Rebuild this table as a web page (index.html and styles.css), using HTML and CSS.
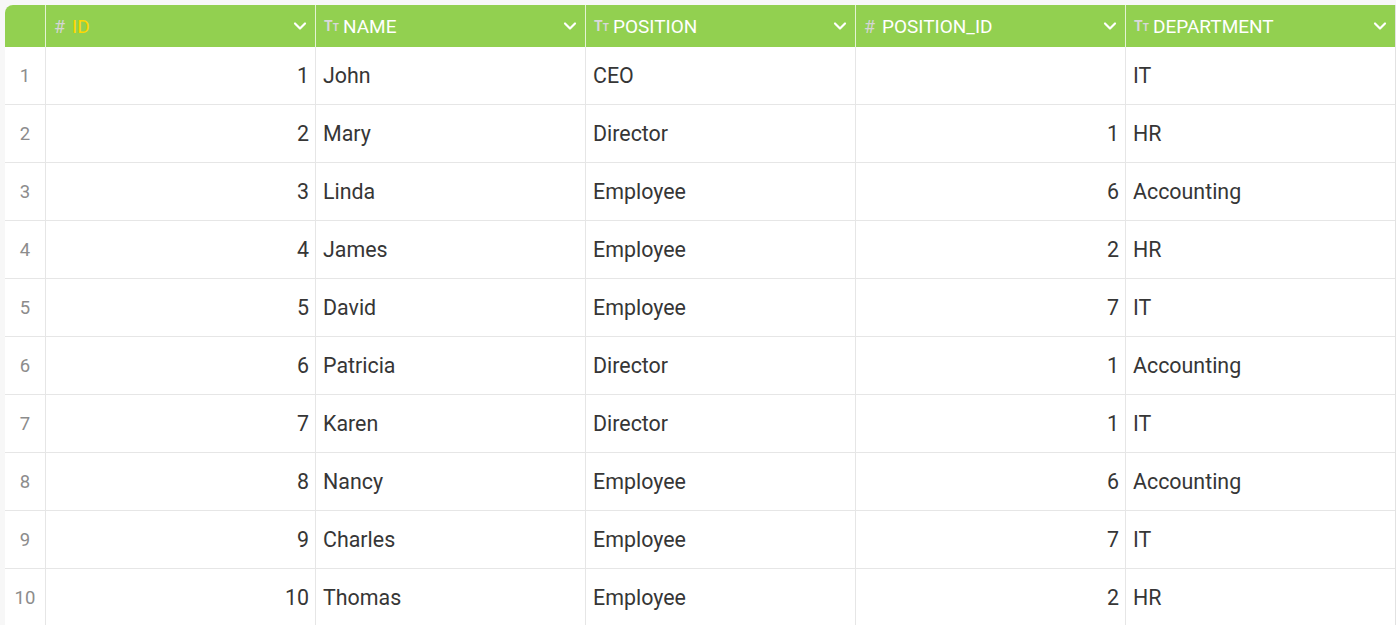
FILE: index.html
```html
<!DOCTYPE html>
<html>
<head>
<meta charset="utf-8">
<link rel="stylesheet" href="styles.css">
</head>
<body>
<div class="grid">
  <div class="row head">
    <div class="cell idx"></div>
    <div class="cell hcell"><span class="hash">#</span><span class="hname key">ID</span><svg class="chev" viewBox="0 0 14 10"><path d="M2 2.5 L7 7.5 L12 2.5" fill="none" stroke="#fff" stroke-width="2.2" stroke-linecap="round" stroke-linejoin="round"/></svg></div>
    <div class="cell hcell"><span class="tt"><span class="tb">T</span><span class="ts">T</span></span><span class="hname">NAME</span><svg class="chev" viewBox="0 0 14 10"><path d="M2 2.5 L7 7.5 L12 2.5" fill="none" stroke="#fff" stroke-width="2.2" stroke-linecap="round" stroke-linejoin="round"/></svg></div>
    <div class="cell hcell"><span class="tt"><span class="tb">T</span><span class="ts">T</span></span><span class="hname">POSITION</span><svg class="chev" viewBox="0 0 14 10"><path d="M2 2.5 L7 7.5 L12 2.5" fill="none" stroke="#fff" stroke-width="2.2" stroke-linecap="round" stroke-linejoin="round"/></svg></div>
    <div class="cell hcell"><span class="hash">#</span><span class="hname">POSITION_ID</span><svg class="chev" viewBox="0 0 14 10"><path d="M2 2.5 L7 7.5 L12 2.5" fill="none" stroke="#fff" stroke-width="2.2" stroke-linecap="round" stroke-linejoin="round"/></svg></div>
    <div class="cell hcell"><span class="tt"><span class="tb">T</span><span class="ts">T</span></span><span class="hname">DEPARTMENT</span><svg class="chev" viewBox="0 0 14 10"><path d="M2 2.5 L7 7.5 L12 2.5" fill="none" stroke="#fff" stroke-width="2.2" stroke-linecap="round" stroke-linejoin="round"/></svg></div>
  </div>
  <div class="row"><div class="cell idx">1</div><div class="cell num">1</div><div class="cell">John</div><div class="cell">CEO</div><div class="cell num"></div><div class="cell">IT</div></div>
  <div class="row"><div class="cell idx">2</div><div class="cell num">2</div><div class="cell">Mary</div><div class="cell">Director</div><div class="cell num">1</div><div class="cell">HR</div></div>
  <div class="row"><div class="cell idx">3</div><div class="cell num">3</div><div class="cell">Linda</div><div class="cell">Employee</div><div class="cell num">6</div><div class="cell">Accounting</div></div>
  <div class="row"><div class="cell idx">4</div><div class="cell num">4</div><div class="cell">James</div><div class="cell">Employee</div><div class="cell num">2</div><div class="cell">HR</div></div>
  <div class="row"><div class="cell idx">5</div><div class="cell num">5</div><div class="cell">David</div><div class="cell">Employee</div><div class="cell num">7</div><div class="cell">IT</div></div>
  <div class="row"><div class="cell idx">6</div><div class="cell num">6</div><div class="cell">Patricia</div><div class="cell">Director</div><div class="cell num">1</div><div class="cell">Accounting</div></div>
  <div class="row"><div class="cell idx">7</div><div class="cell num">7</div><div class="cell">Karen</div><div class="cell">Director</div><div class="cell num">1</div><div class="cell">IT</div></div>
  <div class="row"><div class="cell idx">8</div><div class="cell num">8</div><div class="cell">Nancy</div><div class="cell">Employee</div><div class="cell num">6</div><div class="cell">Accounting</div></div>
  <div class="row"><div class="cell idx">9</div><div class="cell num">9</div><div class="cell">Charles</div><div class="cell">Employee</div><div class="cell num">7</div><div class="cell">IT</div></div>
  <div class="row"><div class="cell idx">10</div><div class="cell num">10</div><div class="cell">Thomas</div><div class="cell">Employee</div><div class="cell num">2</div><div class="cell">HR</div></div>
</div>
</body>
</html>
```
FILE: styles.css
```css
html, body {
  margin: 0;
  padding: 0;
  background: #f7f7f7;
  overflow: hidden;
}
body {
  padding: 5px 0 0 5px;
  font-family: Roboto, "Liberation Sans", sans-serif;
}
.grid {
  width: 1390px;
  background: #fff;
  border-top-left-radius: 8px;
  overflow: hidden;
  border-right: 1px solid #e2e2e2;
}
.row {
  display: grid;
  grid-template-columns: 40px repeat(5, 270px);
  height: 58px;
}
.row .cell {
  border-bottom: 1px solid #e6e6e6;
  border-left: 1px solid #e6e6e6;
  display: flex;
  align-items: center;
  padding: 0 7px;
  font-size: 21.4px;
  color: #363636;
  overflow: hidden;
  white-space: nowrap;
}
.row .cell:first-child {
  border-left: none;
}
.row .idx {
  justify-content: center;
  color: #8c8c8c;
  font-size: 18.5px;
  padding: 0;
}
.row .num {
  justify-content: flex-end;
  padding-right: 6px;
}
.row.head {
  height: 42px;
  background: #92d050;
}
.row.head .cell {
  border-bottom: none;
  border-left: 1px solid rgba(255,255,255,0.75);
  color: #fff;
  font-size: 19px;
  padding: 0 8px 0 8px;
}
.row.head .cell:first-child {
  border-left: none;
}
.hash {
  color: #d4d4d4;
  font-size: 18px;
  margin-right: 5px;
  width: 13px;
}
.tt {
  color: #d8d8d8;
  font-weight: bold;
  margin-right: 3px;
  display: flex;
  align-items: baseline;
  width: 16px;
}
.tb {
  font-size: 14px;
}
.ts {
  font-size: 10px;
}
.hname {
  flex: 1;
}
.hname.key {
  color: #ffd700;
}
.chev {
  width: 14px;
  height: 10px;
}
```
